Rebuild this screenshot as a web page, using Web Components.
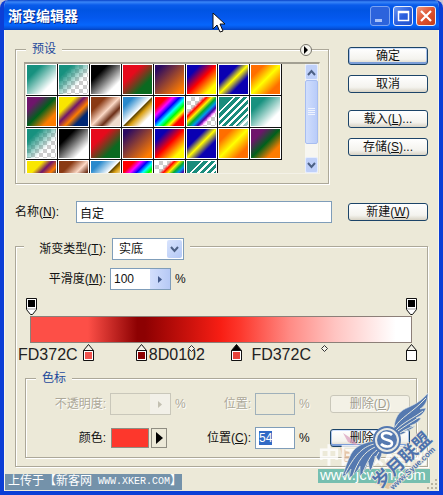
<!DOCTYPE html>
<html lang="zh-CN">
<head>
<meta charset="utf-8">
<title>渐变编辑器</title>
<style>
  body {
    margin: 0;
    background: #c9c6d6;
    color: #111;
    font: 12px/14px "Liberation Sans", "Noto Sans CJK SC", sans-serif;
    --face: #ece9d8;
    --line: #aca899;
    --edge: #7f9db9;
  }
  .top { display: grid; grid-template-columns: minmax(0, 1fr) 80px; column-gap: 16px; row-gap: 17px; align-items: start; }
  .top xp-group { margin-right: 3px; }
  .side { display: flex; flex-direction: column; gap: 10px; padding-top: 5px; }
  .side .second { margin-top: 7px; }
  .top .new { align-self: center; }
  .name { display: flex; align-items: center; gap: 4px; }
  .name xp-field { --label: 57px; --align: left; }
  .kind { margin-top: 15px; }
  .kind-legend { display: flex; align-items: center; gap: 6px; padding-right: 6px; margin-bottom: -6px; }
  .kind-legend xp-field { --label: 82px; }
  .smooth { display: grid; grid-template-columns: 90px 61px 1fr; column-gap: 4px; align-items: center; margin-top: 14px; }
  gradient-ramp { margin: 8px 15px 0 14px; }
  .stops { display: block; margin: 8px 10px 8px 9px; }
  .stop-grid { display: grid; grid-template-columns: 80px 61px 12px minmax(0, 1fr) 40px 27px 80px; column-gap: 4px; row-gap: 12px; align-items: center; padding: 8px 6px 8px 0; }
</style>
</head>
<body>
<xp-window caption="渐变编辑器">
  <div class="top">
    <xp-group>
      <span slot="legend">预设</span>
      <preset-list></preset-list>
    </xp-group>
    <div class="side">
      <xp-button label="确定" primary></xp-button>
      <xp-button label="取消"></xp-button>
      <xp-button class="second" label="载入(L)..."></xp-button>
      <xp-button label="存储(S)..."></xp-button>
    </div>
    <div class="name"><xp-field label="名称(N):" value="自定"></xp-field></div>
    <xp-button class="new" label="新建(W)"></xp-button>
  </div>
  <xp-group class="kind" inset="0">
    <div slot="legend" class="kind-legend"><xp-field type="select" label="渐变类型(T):" value="实底"></xp-field></div>
    <div class="smooth"><xp-field type="popup" label="平滑度(M):" value="100" unit="%"></xp-field></div>
    <gradient-ramp></gradient-ramp>
    <xp-group class="stops" inset="0">
      <span slot="legend">色标</span>
      <div class="stop-grid">
        <xp-field type="popup" label="不透明度:" unit="%" disabled></xp-field>
        <xp-field label="位置:" unit="%" disabled></xp-field>
        <xp-button label="删除(D)" disabled></xp-button>
        <xp-field type="color" label="颜色:" value="#fd372c" unit=" "></xp-field>
        <xp-field label="位置(C):" value="54" unit="%" selected></xp-field>
        <xp-button label="删除(D)" primary></xp-button>
      </div>
    </xp-group>
  </xp-group>
</xp-window>

<script>
const access = text => text.replace(/\((\w)\)/, '(<u>$1</u>)');

class XpWindow extends HTMLElement {
  connectedCallback() {
    this.attachShadow({ mode: 'open' }).innerHTML = `
      <style>
        :host { display: flex; flex-direction: column; position: relative; min-height: 100vh; box-sizing: border-box;
          border: solid #0b3ed6; border-width: 0 4px 4px; border-radius: 8px 8px 0 0; background: var(--face);
          box-shadow: inset 1px 0 #f6f4ec, inset -1px 0 #f6f4ec; overflow: hidden; }
        header { display: flex; align-items: center; gap: 3px; height: 30px; margin: 0 -4px; padding: 2px 7px 0 8px; box-sizing: border-box;
          background: linear-gradient(#0842c8 0, #3a86f8 2px, #0a5ceb 5px, #0054e3 10px, #0458ee 18px, #0666fd 25px, #0554e0 28px, #0341bd 30px); }
        h1 { flex: 1; margin: 0; font-size: 14px; line-height: 18px; color: #fff; text-shadow: 1px 1px #0b2c86; }
        header button { width: 20px; height: 20px; padding: 0; border: 1px solid #e8effc; border-radius: 3px; background: linear-gradient(135deg, #6a97f3, #2b5fde 50%, #2152cb); }
        header button.min { border-color: #7ba3f2; background: #2c63dc; }
        header button.close { background: linear-gradient(135deg, #f0987e, #dd5230 50%, #c43c16); }
        svg { display: block; }
        main { padding: 12px 11px 0; }
        footer { display: flex; justify-content: space-between; align-items: flex-end; margin-top: 7px; padding-left: 1px; }
        .source { display: flex; align-items: center; height: 16px; padding-left: 3px; font: 10px/16px "Liberation Mono", "Noto Sans CJK SC", monospace; color: #fff; background: #7492aa; white-space: pre; }
        .source b { font-weight: 400; font-size: 12px; }
        .cursor { position: absolute; left: 208px; top: 12px; }
        site-mark { position: absolute; right: 0; bottom: 0; }
      </style>
      <header>
        <h1>${this.getAttribute('caption')}</h1>
        <button class="min" aria-label="最小化"><svg width="18" height="18"><path d="M4 12h7v3H4z" fill="#a9c3fa"/></svg></button>
        <button aria-label="最大化"><svg width="18" height="18"><path d="M4.5 4.500h10v9h-10z M4 5.500h11" fill="none" stroke="#fff" stroke-width="1.500"/></svg></button>
        <button class="close" aria-label="关闭"><svg width="18" height="18"><path d="M4 4l10 10M14 4L4 14" stroke="#fff" stroke-width="2.200"/></svg></button>
      </header>
      <main><slot></slot></main>
      <footer>
        <div class="source"><b>上传于【新客网</b> WWW.XKER.COM<b>】</b></div>
        <svg width="12" height="12"><path d="M8 1h2v2H8zM4 5h2v2H4zM8 5h2v2H8zM0 9h2v2H0zM4 9h2v2H4zM8 9h2v2H8z" fill="#b8b4a2"/></svg>
      </footer>
      <site-mark></site-mark>
      <svg class="cursor" width="14" height="22"><path d="M1 1v16l4-4 3 7 3-1-3-7h5z" fill="#fff" stroke="#111"/></svg>`;
  }
}

class XpGroup extends HTMLElement {
  connectedCallback() {
    this.attachShadow({ mode: 'open' }).innerHTML = `
      <style>
        :host { display: block; }
        fieldset { min-width: 0; margin: 0; padding: ${this.hasAttribute('inset') ? '0' : '6px 8px 9px'}; border: 1px solid var(--line);
          box-shadow: 1px 1px #fff, inset 1px 1px #fff; }
        legend { margin-left: ${this.classList.contains('kind') ? 8 : this.hasAttribute('inset') ? 10 : 2}px; padding: 0; background: var(--face); }
        ::slotted(span) { display: block; padding: 0 6px; color: #1f4a9c; }
      </style>
      <fieldset><legend><slot name="legend"></slot></legend><slot></slot></fieldset>`;
  }
}

class XpButton extends HTMLElement {
  connectedCallback() {
    const off = this.hasAttribute('disabled');
    this.attachShadow({ mode: 'open' }).innerHTML = `
      <style>
        :host { display: block; }
        button { display: block; width: 100%; height: 18px; padding: 0; border: 1px solid #1c4468; border-radius: 3px; color: #111;
          font: inherit; line-height: 16px; white-space: nowrap; background: linear-gradient(#fff, #f4f3ee 70%, #d8d3c5); }
        button.primary { box-shadow: inset 0 1px #cfe0fb, inset 0 -2px #7d9fd8, inset 1px 0 #a9c2ec, inset -1px 0 #a9c2ec; }
        button:disabled { border-color: #c9c7ba; color: #a29f91; background: #f3f1e6; text-shadow: 1px 1px #fff; }
      </style>
      <button class="${this.hasAttribute('primary') ? 'primary' : ''}" ${off ? 'disabled' : ''}>${access(this.getAttribute('label'))}</button>`;
  }
}

/* Label, control and unit become cells of the surrounding flex or grid box. */
class XpField extends HTMLElement {
  connectedCallback() {
    const type = this.getAttribute('type') || 'text';
    const value = this.getAttribute('value') || '';
    const off = this.hasAttribute('disabled') ? 'disabled' : '';
    const unit = this.getAttribute('unit');
    const control = {
      text: `<input id="c" value="${value}" ${off}>`,
      popup: `<div class="box"><input id="c" value="${value}" ${off}><button aria-label="滑块" ${off}><svg width="5" height="7"><path d="M0 0l4 3.500L0 7z" fill="currentColor"/></svg></button></div>`,
      select: `<div class="pick"><select id="c"><option>${value}</option><option>杂色</option></select><span><svg width="9" height="7"><path d="M1 1l3.500 4L8 1" fill="none" stroke="#4d6185" stroke-width="2"/></svg></span></div>`,
      color: `<div class="color"><button id="c" class="swatch"></button><button class="more" aria-label="颜色选项"><svg width="7" height="12"><path d="M0 0l7 6-7 6z" fill="#000"/></svg></button></div>`
    }[type];
    this.attachShadow({ mode: 'open' }).innerHTML = `
      <style>
        :host { display: contents; }
        label { flex: none; width: var(--label, auto); text-align: var(--align, right); white-space: nowrap; }
        label.disabled, .unit.disabled { color: #aca899; text-shadow: 1px 1px #fff; }
        input, select { box-sizing: border-box; width: 100%; min-width: 0; height: 22px; margin: 0; padding: 0 3px; border: 1px solid var(--edge); border-radius: 0;
          background: #fff; color: #111; font: inherit; outline: none; appearance: none; }
        input::selection { background: #316ac5; color: #fff; }
        input:disabled { background: var(--face); border-color: ${type === 'popup' ? '#c9c7ba' : '#9fb0ba'}; }
        .box { display: flex; box-sizing: border-box; height: 22px; border: 1px solid ${off ? '#c9c7ba' : 'var(--edge)'}; background: ${off ? 'var(--face)' : '#fff'}; }
        .box input { flex: 1; height: 20px; border: 0; }
        .box button { display: grid; place-items: center; width: 20px; padding: 0; border: 0; background: linear-gradient(90deg, #d3dffc, #b6c9f5); color: #42598a; }
        .box button:disabled { background: #f2f0e8; color: #c3c0b2; }
        .pick { display: grid; width: 72px; align-items: center; }
        .pick select, .pick span { grid-area: 1 / 1; }
        .pick select { padding-left: 6px; }
        .pick span { justify-self: end; display: grid; place-items: center; width: 15px; height: 18px; margin-right: 2px; background: linear-gradient(135deg, #d9e4fd, #b3c8f6); border-radius: 2px; pointer-events: none; }
        .color { display: flex; gap: 2px; height: 20px; padding-left: 1px; }
        .color button { box-sizing: border-box; padding: 0; border: 1px solid #8f8d82; }
        .swatch { width: 38px; background: ${type === 'color' ? value : 'none'}; }
        .more { display: grid; place-items: center; width: 16px; background: var(--face); }
      </style>
      <label for="c" class="${off}">${access(this.getAttribute('label'))}</label>${control}${unit ? `<span class="unit ${off}">${unit}</span>` : ''}`;
  }
}

const checker = 'repeating-conic-gradient(#ccc 0 25%, #fff 0 50%) 0 0 / 8px 8px';
const fills = {
  teal: 'linear-gradient(135deg, #17917f 25%, #fff 75%)',
  clear: `linear-gradient(135deg, #17917f 22%, #17917f00 66%), ${checker}`,
  black: 'linear-gradient(135deg, #000 28%, #fff 78%)',
  red: 'linear-gradient(135deg, #e60a1c 32%, #0a6a20 72%)',
  violet: 'linear-gradient(135deg, #2a0a62 12%, #ff7c00 88%)',
  primary: 'linear-gradient(135deg, #0a00b2 22%, #f00 50%, #fffc00 82%)',
  blue: 'linear-gradient(135deg, #0a00b2 32%, #fffc00 50%, #0a00b2 70%)',
  orange: 'linear-gradient(135deg, #ff6e00 22%, #ffff00 50%, #ff6e00 80%)',
  forest: 'linear-gradient(135deg, #6f156c 22%, #00601b 50%, #fd7c00 78%)',
  pansy: 'linear-gradient(135deg, #f9e600 28%, #6f156c 44%, #fd7c00 60%, #002874 76%)',
  copper: 'linear-gradient(135deg, #8a3a14 25%, #fbd8c5 50%, #6c2e16 68%, #efdbcd 82%)',
  chrome: 'linear-gradient(135deg, #2989cc 18%, #fff 49%, #5c4200 51%, #d99f12 60%, #fff 80%)',
  spectrum: 'linear-gradient(135deg, #f00 20%, #f0f 32%, #00f 43%, #0ff 54%, #0f0 64%, #ff0 73%, #f00 82%)',
  rainbow: `linear-gradient(135deg, #fff0 27%, #f00 34%, #fe0 43%, #0a3 52%, #09e 60%, #40a 68%, #f0f6 74%, #fff0 78%), ${checker}`,
  stripes: 'linear-gradient(135deg, #1a8c7c 22%, #0000 22% 82%, #fff8 82%), repeating-linear-gradient(135deg, #fff 0 2px, #1a8c7c 2px 5px)'
};
const cycle = 'teal clear black red violet primary blue orange forest pansy copper chrome spectrum rainbow stripes'.split(' ');
const presets = [...cycle, ...cycle];

class PresetList extends HTMLElement {
  connectedCallback() {
    this.attachShadow({ mode: 'open' }).innerHTML = `
      <style>
        :host { display: block; position: relative; }
        .list { display: flex; justify-content: space-between; box-sizing: border-box; height: 112px; padding: 0 1px; border: 1px solid #f4f2e8; border-top: 2px solid #a3a093; border-left-color: #a3a093; overflow: hidden; }
        .cells { display: grid; grid-template-columns: repeat(8, 32px); grid-auto-rows: 32px; }
        .cells button { margin: 0 1px 1px 0; padding: 0; border: 1px solid #fff; background-origin: border-box; box-shadow: 1px 1px #111, 0 1px #111, 1px 0 #111; }
        .bar { display: flex; flex-direction: column; width: 13px; background: #f7f6f1; }
        .bar button { display: grid; place-items: center; height: 16px; padding: 0; border: 1px solid #e5edff; border-radius: 2px; background: #bfd0f9; }
        .thumb { display: grid; place-items: center; height: 64px; border: 1px solid #a7bdf0; border-radius: 2px; box-sizing: border-box; background: linear-gradient(90deg, #d0defd, #b9ccf9); }
        .down { margin-top: auto; }
        .menu { display: grid; place-items: center; position: absolute; right: 8px; top: -18px; width: 12px; height: 12px; padding: 0; border: 1px solid #77756b; border-radius: 50%; background: #f6f5ee; }
      </style>
      <button class="menu" aria-label="菜单"><svg width="4" height="8"><path d="M0 0l4 4-4 4z"/></svg></button>
      <div class="list">
        <div class="cells">${presets.map(p => `<button aria-label="${p}" style="background:${fills[p]}"></button>`).join('')}</div>
        <div class="bar">
          <button aria-label="向上"><svg width="9" height="7"><path d="M1 6l3.500-4L8 6" fill="none" stroke="#4d6185" stroke-width="2"/></svg></button>
          <div class="thumb"><svg width="7" height="8"><path d="M0 .5h7M0 2.500h7M0 4.500h7M0 6.500h7" stroke="#eef3ff"/></svg></div>
          <button class="down" aria-label="向下"><svg width="9" height="7"><path d="M1 1l3.500 4L8 1" fill="none" stroke="#4d6185" stroke-width="2"/></svg></button>
        </div>
      </div>`;
  }
}

class GradientRamp extends HTMLElement {
  connectedCallback() {
    const top = x => `<button style="left:${x}%" aria-label="不透明度色标"><svg width="11" height="17"><path d="M.5 .5h10v11l-4 5h-2l-4-5z" fill="#fff" stroke="#111"/><path d="M2 2h7v7H2z"/><path d="M1 11h9" stroke="#999"/></svg></button>`;
    const low = (x, c, on) => `<button style="left:${x}%" aria-label="色标"><svg width="11" height="17"><path d="M.5 6.500L5.500 .5l5 6z" fill="${on ? '#000' : '#f4f2e8'}" stroke="#111"/><path d="M.5 6.500h10v10H.5z" fill="#fff" stroke="#111"/><path d="M2 8h7v7H2z" fill="${c}"/></svg></button>`;
    const mid = x => `<button class="mid" style="left:${x}%" aria-label="中点"><svg width="7" height="7"><path d="M3.500 .5l3 3-3 3-3-3z" fill="#f4f2e8" stroke="#333"/></svg></button>`;
    this.attachShadow({ mode: 'open' }).innerHTML = `
      <style>
        :host { display: block; }
        .track { position: relative; height: 18px; margin: 0 1px; }
        .low { height: 20px; }
        button { position: absolute; top: 0; width: 11px; height: 17px; margin-left: -5px; padding: 0; border: 0; background: none; }
        .low button { top: 1px; }
        .low button.mid { top: 2px; width: 7px; height: 7px; margin-left: -3px; }
        svg { display: block; }
        .ramp { height: 27px; box-sizing: border-box; border: 1px solid #8c7f78;
          background: linear-gradient(90deg, #fd4f47 0 15%, #8d0102 28%, #8d0102 30%, #f81e14 50%, #fd372c 55%, #ff8a84 68%, #ffc4c1 80%, #fff 96%); }
        .hex { position: absolute; top: 3px; font-size: 16px; line-height: 18px; color: #222; }
      </style>
      <div class="track">${top(0)}${top(100)}</div>
      <div class="ramp"></div>
      <div class="track low">
        <span class="hex" style="left:-13px">FD372C</span><span class="hex" style="left:31%">8D0102</span><span class="hex" style="left:58%">FD372C</span>
        ${low(15, '#f0544e')}${low(29, '#8d0102')}${mid(42)}${low(54, '#e8423a', true)}${mid(77)}${low(100, '#fff')}
      </div>`;
  }
}

/* Site banner and winged emblem laid over the lower right corner. */
class SiteMark extends HTMLElement {
  connectedCallback() {
    this.attachShadow({ mode: 'open' }).innerHTML = `
      <style>:host { display: block; pointer-events: none; } svg { display: block; }</style>
      <svg width="124" height="111" viewBox="315 380 124 111">
        <path d="M340 447l14 8 4 8-3 6-12-9z" fill="#e2b795" opacity=".7"/>
        <path d="M343 433l9 6 8 8-12-5z" fill="#d79aba" opacity=".7"/>
        <path d="M372 482l30-6 8 2-22 11z" fill="#e0bd92" opacity=".8"/>
        <text x="318" y="463" font-size="22" font-weight="700" fill="#fff" opacity=".8">中国教程网</text>
        <path d="M318 469h112v14H318z" fill="#76bfb0"/>
        <text x="320" y="480" font-size="15" fill="#fff">www.jcwcn.com</text>
        <g fill="#5579b0" stroke="#dfe5e6" stroke-width=".6">
          <path d="M394 430c0-9 3-16 9-20 7-4 16-6 25-17 0 7-3 13-8 16l6-1c-2 6-6 8-10 10l5 0c-3 5-7 6-11 8l5 0c-4 4-8 5-12 5l3 1c-4 3-8 3-11 3z"/>
          <path d="M376 441c-10 1-20 4-25 13-4 8-6 15-9 23 4-2 7-5 9-8l-2 9c5-3 9-7 11-12l0 10c5-5 7-9 8-14l2 9c4-5 5-10 5-15l4 5c2-4 3-7 3-10z"/>
        </g>
        <g fill="none" stroke="#e6e8df" stroke-width="1">
          <path d="M395 427c6-10 17-14 31-29M396 430c8-8 16-11 27-19M398 431c7-5 12-8 20-13M400 433c6-4 9-5 14-7"/>
          <path d="M374 444c-12 3-20 12-29 30M375 447c-11 5-17 14-22 28M377 450c-7 5-10 13-14 22M379 452c-4 6-5 10-7 17"/>
        </g>
        <circle cx="387" cy="440" r="13" fill="#e8e9e4" stroke="#5579b0" stroke-width="2"/>
        <circle cx="387" cy="440" r="10" fill="#5579b0"/>
        <path d="M392 435c-3-3-10-3-10 1 0 5 10 3 10 7 0 5-8 4-11 1" fill="none" stroke="#fff" stroke-width="2.600"/>
        <g font-weight="700" fill="#4f73ad" stroke="#e8e6da" paint-order="stroke" stroke-width="1.500">
          <text font-size="18" transform="translate(380 489) rotate(-43)">岁月联盟</text>
          <text font-size="8" transform="translate(393 490) rotate(-43)">www.Syue.com</text>
        </g>
      </svg>`;
  }
}

customElements.define('site-mark', SiteMark);
customElements.define('xp-button', XpButton);
customElements.define('xp-field', XpField);
customElements.define('preset-list', PresetList);
customElements.define('gradient-ramp', GradientRamp);
customElements.define('xp-group', XpGroup);
customElements.define('xp-window', XpWindow);
document.querySelectorAll('xp-field[selected]').forEach(f => {
  const input = f.shadowRoot.querySelector('input');
  input.focus();
  input.select();
});
</script>
</body>
</html>
